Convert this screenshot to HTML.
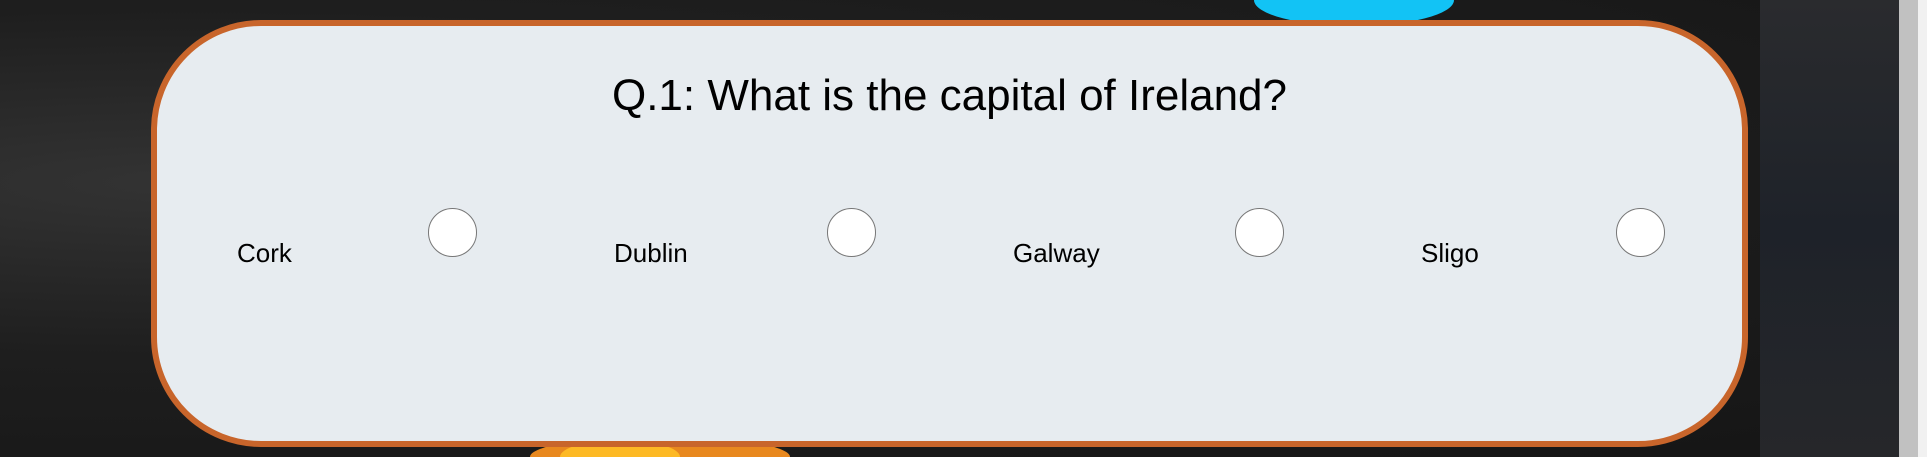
<!DOCTYPE html>
<html style="background:#1a1a1a;height:457px;overflow:hidden"><head><style>
html,body{margin:0;padding:0;}
body{width:1927px;height:457px;overflow:hidden;position:relative;font-family:"Liberation Sans",sans-serif;
background:radial-gradient(ellipse at 10% 40%,#333 0,#1e1e1e 45%,#151515 100%);}
.bg1{position:absolute;left:1254px;top:0;width:200px;height:26px;border-radius:0 0 100px 100px/0 0 26px 26px;background:#12c3f5;}
.bg2{position:absolute;left:530px;top:436px;width:260px;height:21px;border-radius:130px 130px 0 0/21px 21px 0 0;background:#e8881e;}
.bg3{position:absolute;left:560px;top:440px;width:120px;height:17px;border-radius:60px 60px 0 0/17px 17px 0 0;background:#fdb924;}
.bg4{position:absolute;left:1760px;top:0;width:139px;height:457px;background:linear-gradient(180deg,#2a2b2e,#1e2229 50%,#26272a);}
.sb{position:absolute;left:1899px;top:0;width:19px;height:457px;background:#c1c1c1;}
.sb2{position:absolute;left:1918px;top:0;width:9px;height:457px;background:#f1f1f1;}
.card{position:absolute;left:151px;top:20px;width:1585px;height:415px;border:6px solid #c8652b;border-radius:110px;background:#e7ecf0;}
h1{position:absolute;left:0;right:0;top:45px;margin:0;text-align:center;font-weight:normal;font-size:44px;color:#000;}
.lbl{position:absolute;top:212px;font-size:26px;color:#000;}
.r{position:absolute;top:182px;width:47px;height:47px;border-radius:50%;background:#fff;border:1px solid #777;}
</style></head><body>
<div class="bg1"></div><div class="bg2"></div><div class="bg3"></div><div class="bg4"></div>
<div class="sb"></div><div class="sb2"></div>
<div class="card">
<h1>Q.1: What is the capital of Ireland?</h1>
<div class="lbl" style="left:80px">Cork</div><div class="r" style="left:271px"></div>
<div class="lbl" style="left:457px">Dublin</div><div class="r" style="left:670px"></div>
<div class="lbl" style="left:856px">Galway</div><div class="r" style="left:1078px"></div>
<div class="lbl" style="left:1264px">Sligo</div><div class="r" style="left:1459px"></div>
</div>
</body></html>
